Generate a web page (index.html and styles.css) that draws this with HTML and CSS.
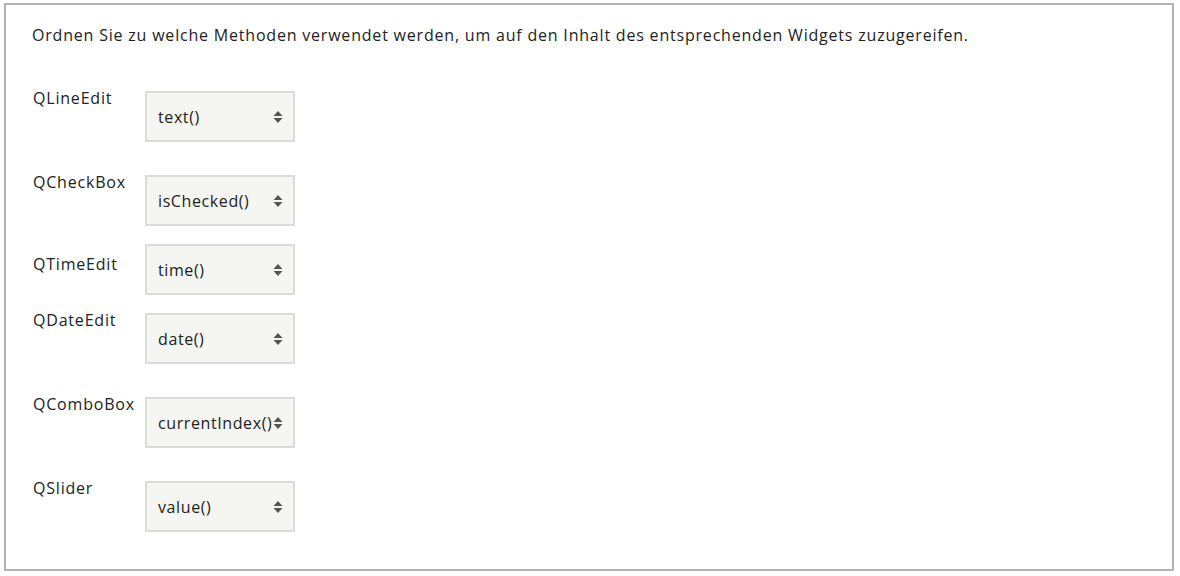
FILE: index.html
```html
<!DOCTYPE html>
<html lang="de">
<head>
<meta charset="utf-8">
<title>Zuordnung</title>
<link rel="stylesheet" href="styles.css">
</head>
<body>
<div class="panel">
  <p class="question">Ordnen Sie zu welche Methoden verwendet werden, um auf den Inhalt des entsprechenden Widgets zuzugereifen.</p>
  <div class="rows">
    <div class="row r1">
      <div class="label">QLineEdit</div>
      <div class="select"><span class="val">text()</span><svg class="arrow" viewBox="0 0 10 14" width="10" height="14"><path d="M5 1 L9.5 6 H0.5 Z M5 13 L9.5 8 H0.5 Z"/></svg></div>
    </div>
    <div class="row r2">
      <div class="label">QCheckBox</div>
      <div class="select"><span class="val">isChecked()</span><svg class="arrow" viewBox="0 0 10 14" width="10" height="14"><path d="M5 1 L9.5 6 H0.5 Z M5 13 L9.5 8 H0.5 Z"/></svg></div>
    </div>
    <div class="row r3 low">
      <div class="label">QTimeEdit</div>
      <div class="select"><span class="val">time()</span><svg class="arrow" viewBox="0 0 10 14" width="10" height="14"><path d="M5 1 L9.5 6 H0.5 Z M5 13 L9.5 8 H0.5 Z"/></svg></div>
    </div>
    <div class="row r4">
      <div class="label">QDateEdit</div>
      <div class="select"><span class="val">date()</span><svg class="arrow" viewBox="0 0 10 14" width="10" height="14"><path d="M5 1 L9.5 6 H0.5 Z M5 13 L9.5 8 H0.5 Z"/></svg></div>
    </div>
    <div class="row r5">
      <div class="label">QComboBox</div>
      <div class="select"><span class="val">currentIndex()</span><svg class="arrow" viewBox="0 0 10 14" width="10" height="14"><path d="M5 1 L9.5 6 H0.5 Z M5 13 L9.5 8 H0.5 Z"/></svg></div>
    </div>
    <div class="row r6">
      <div class="label">QSlider</div>
      <div class="select"><span class="val">value()</span><svg class="arrow" viewBox="0 0 10 14" width="10" height="14"><path d="M5 1 L9.5 6 H0.5 Z M5 13 L9.5 8 H0.5 Z"/></svg></div>
    </div>
  </div>
</div>
</body>
</html>
```

FILE: styles.css
```css
html, body {
  margin: 0;
  padding: 0;
  background: #ffffff;
}

body {
  font-family: "Open Sans", "Lato", sans-serif;
  font-size: 16px;
  letter-spacing: 0.8px;
  color: #222222;
  padding: 3px 0 0 4px;
}

.panel {
  width: 1170px;
  height: 568px;
  box-sizing: border-box;
  border: 2px solid #b3b3b3;
  padding: 0 0 0 26px;
}

.question {
  margin: 0;
  padding-top: 20px;
  line-height: 20px;
  height: 20px;
  white-space: nowrap;
}

.rows {
  display: flex;
  flex-direction: column;
  padding-top: 43px;
}

.row {
  display: flex;
  align-items: flex-start;
}

.label {
  width: 113px;
  flex: none;
  line-height: 20px;
  padding-left: 1px;
  box-sizing: border-box;
}

.select {
  width: 150px;
  height: 51px;
  box-sizing: border-box;
  border: 2px solid #dcdcd6;
  background: #f5f5f2;
  display: flex;
  align-items: center;
  padding: 0 10px 0 11px;
  margin-top: 3px;
  color: #222222;
}

.row.low .label {
  padding-top: 10px;
}

.row.low .select {
  margin-top: 0;
}

.val {
  flex: 1;
  min-width: 0;
  white-space: nowrap;
  line-height: 20px;
  letter-spacing: 0.6px;
}

.arrow {
  flex: none;
  fill: #555555;
}

.r2 { margin-top: 30px; }
.r3 { margin-top: 18px; }
.r4 { margin-top: 15px; }
.r5 { margin-top: 30px; }
.r6 { margin-top: 30px; }
```
